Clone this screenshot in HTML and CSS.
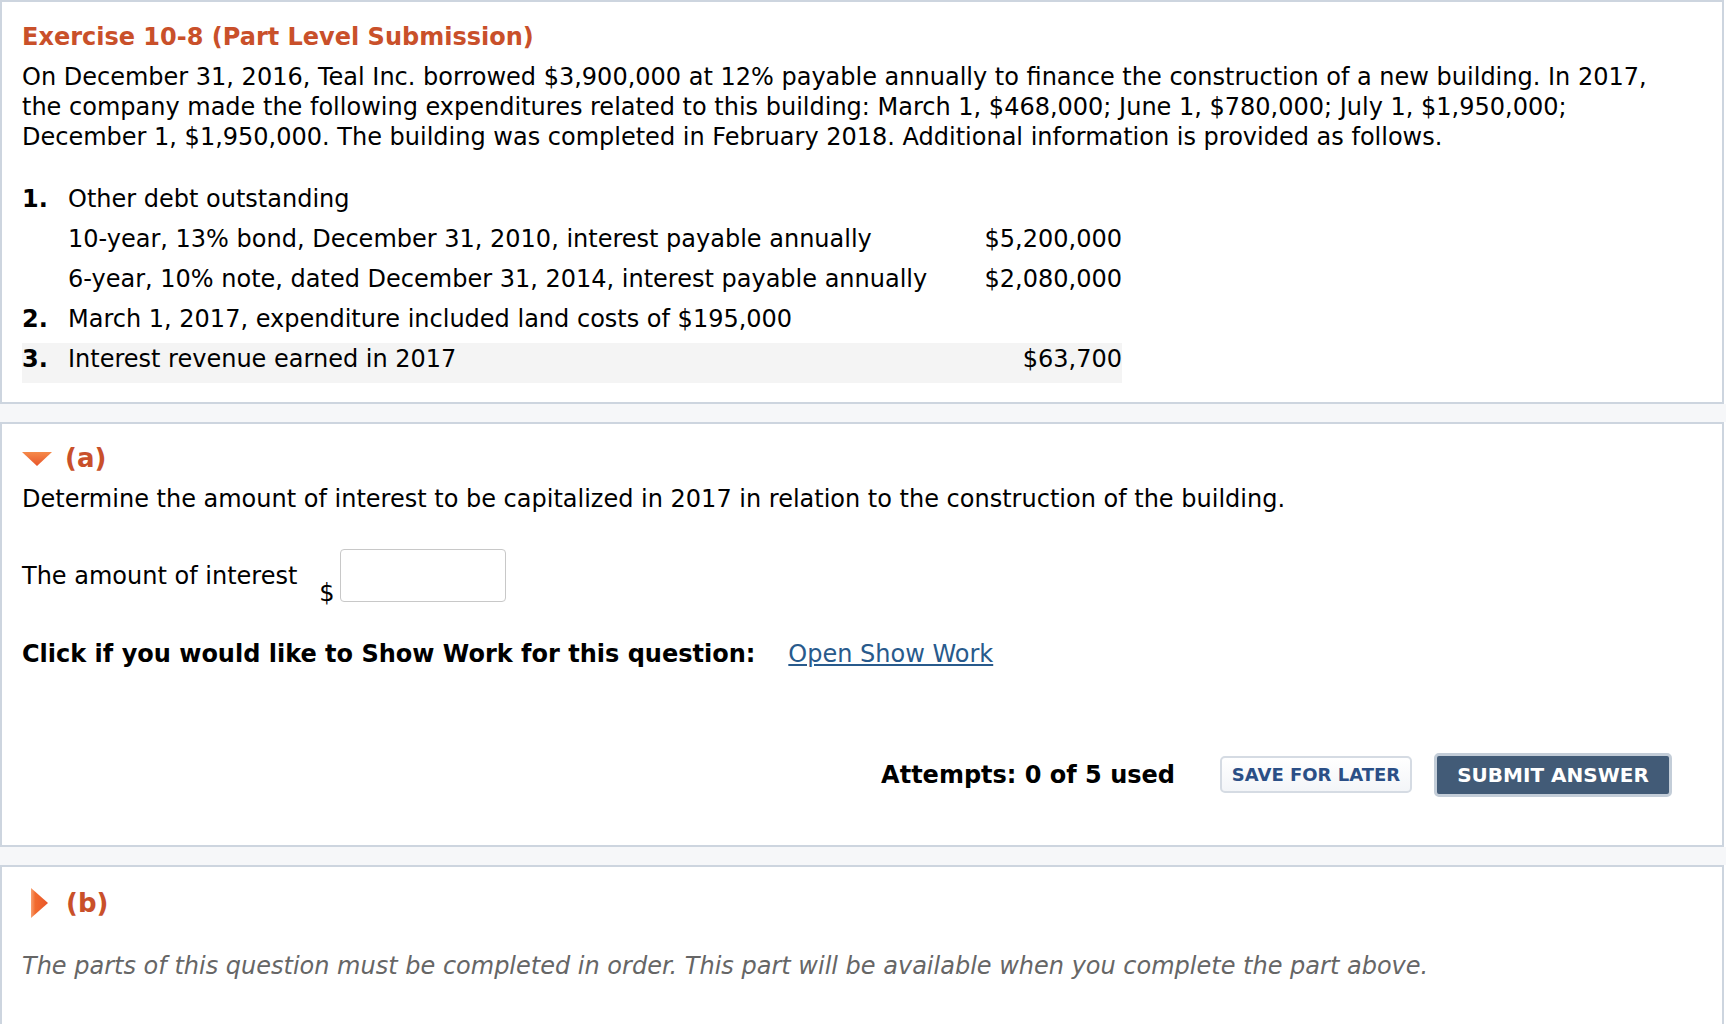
FILE: index.html
```html
<!DOCTYPE html>
<html lang="en">
<head>
<meta charset="utf-8">
<title>Exercise 10-8</title>
<link rel="stylesheet" href="styles.css">
</head>
<body>
<div class="page">
  <section class="card card-question">
    <h1 class="title">Exercise 10-8 (Part Level Submission)</h1>
    <p class="intro">On December 31, 2016, Teal Inc. borrowed $3,900,000 at 12% payable annually to finance the construction of a new building. In 2017, the company made the following expenditures related to this building: March 1, $468,000; June 1, $780,000; July 1, $1,950,000; December 1, $1,950,000. The building was completed in February 2018. Additional information is provided as follows.</p>
    <table class="info">
      <tr>
        <td class="num">1.</td>
        <td class="label">Other debt outstanding</td>
        <td class="amt"></td>
      </tr>
      <tr>
        <td class="num"></td>
        <td class="label">10-year, 13% bond, December 31, 2010, interest payable annually</td>
        <td class="amt">$5,200,000</td>
      </tr>
      <tr>
        <td class="num"></td>
        <td class="label">6-year, 10% note, dated December 31, 2014, interest payable annually</td>
        <td class="amt">$2,080,000</td>
      </tr>
      <tr>
        <td class="num">2.</td>
        <td class="label">March 1, 2017, expenditure included land costs of $195,000</td>
        <td class="amt"></td>
      </tr>
      <tr class="shaded">
        <td class="num">3.</td>
        <td class="label">Interest revenue earned in 2017</td>
        <td class="amt">$63,700</td>
      </tr>
    </table>
  </section>

  <div class="spacer"></div>

  <section class="card card-part">
    <div class="part-head">
      <svg class="tri-down" width="30" height="15" viewBox="0 0 30 15" aria-hidden="true">
        <defs>
          <linearGradient id="gdown" x1="0" y1="0" x2="0" y2="1">
            <stop offset="0" stop-color="#f58a4a"/>
            <stop offset="1" stop-color="#e8552a"/>
          </linearGradient>
        </defs>
        <polygon points="0,1 30,1 15,15" fill="url(#gdown)"/>
      </svg>
      <span class="part-label">(a)</span>
    </div>
    <p class="prompt">Determine the amount of interest to be capitalized in 2017 in relation to the construction of the building.</p>
    <div class="answer-row">
      <span class="answer-label">The amount of interest</span>
      <span class="dollar">$</span>
      <span class="answer-input"></span>
    </div>
    <div class="showwork">
      <span class="showwork-text">Click if you would like to Show Work for this question:</span>
      <a class="showwork-link" href="#">Open Show Work</a>
    </div>
    <div class="actions">
      <span class="attempts">Attempts: 0 of 5 used</span>
      <span class="btn btn-save">SAVE FOR LATER</span>
      <span class="btn btn-submit">SUBMIT ANSWER</span>
    </div>
  </section>

  <div class="spacer"></div>

  <section class="card card-part card-last">
    <div class="part-head">
      <svg class="tri-right" width="18" height="30" viewBox="0 0 18 30" aria-hidden="true">
        <defs>
          <linearGradient id="gright" x1="0" y1="0" x2="1" y2="0">
            <stop offset="0" stop-color="#f8a070"/>
            <stop offset="0.25" stop-color="#f26b2e"/>
            <stop offset="1" stop-color="#e8552a"/>
          </linearGradient>
        </defs>
        <polygon points="0,0 17,15 0,30" fill="url(#gright)"/>
      </svg>
      <span class="part-label">(b)</span>
    </div>
    <p class="locked">The parts of this question must be completed in order. This part will be available when you complete the part above.</p>
  </section>
</div>
</body>
</html>
```

FILE: styles.css
```css
html, body {
  margin: 0;
  padding: 0;
  background: #ffffff;
}

body {
  font-family: "DejaVu Sans", Verdana, sans-serif;
  font-size: 24px;
  color: #000000;
}

.page {
  width: 1724px;
}

.card {
  background: #ffffff;
  border: 2px solid #cdd5df;
  padding: 0 20px;
}

.spacer {
  height: 18px;
  background: #f6f7f9;
  width: 1726px;
}

.card-question {
  padding-top: 20px;
  padding-bottom: 19px;
}

.title {
  margin: 0;
  font-size: 24px;
  line-height: 30px;
  font-weight: bold;
  color: #c9502a;
}

.intro {
  margin: 10px 0 0;
  line-height: 30px;
  max-width: 1670px;
}

.info {
  margin-top: 31px;
  border-collapse: collapse;
  width: 1100px;
}

.info td {
  padding: 1px 0 9px;
  vertical-align: top;
  line-height: 30px;
}

.info .num {
  width: 46px;
  font-weight: bold;
}

.info .label {
  white-space: nowrap;
}

.info .amt {
  text-align: right;
  white-space: nowrap;
}

.info .shaded td {
  background: #f4f4f4;
}

.card-part {
  padding-top: 19px;
  padding-bottom: 49px;
}

.part-head {
  display: flex;
  align-items: center;
  height: 30px;
}

.tri-down {
  display: block;
  margin-right: 13px;
}

.tri-right {
  display: block;
  margin-left: 9px;
  margin-right: 17px;
}

.part-label {
  font-size: 26px;
  font-weight: bold;
  color: #c9502a;
  line-height: 30px;
}

.prompt {
  margin: 11px 0 0;
  line-height: 30px;
}

.answer-row {
  margin-top: 35px;
  display: flex;
  align-items: center;
  height: 53px;
}

.answer-label {
  line-height: 30px;
  margin-right: 22px;
}

.dollar {
  align-self: flex-end;
  line-height: 18px;
  margin-right: 5px;
}

.answer-input {
  display: block;
  width: 164px;
  height: 51px;
  border: 1px solid #c8c8c8;
  border-radius: 4px;
  background: #ffffff;
}

.showwork {
  margin-top: 37px;
  display: flex;
  align-items: center;
  line-height: 30px;
}

.showwork-text {
  font-weight: bold;
  margin-right: 33px;
}

.showwork-link {
  color: #285a8c;
  text-decoration: underline;
}

.actions {
  margin-top: 84px;
  display: flex;
  justify-content: flex-end;
  align-items: center;
  padding-right: 30px;
  height: 43px;
}

.attempts {
  font-weight: bold;
  font-size: 24px;
  margin-right: 45px;
}

.btn {
  display: flex;
  align-items: center;
  justify-content: center;
  font-weight: bold;
  box-sizing: border-box;
  border-radius: 5px;
}

.btn-save {
  width: 192px;
  height: 37px;
  font-size: 18px;
  color: #2b4f86;
  background: linear-gradient(#ffffff, #f3f5f8);
  border: 2px solid #d5dbe3;
  margin-right: 22px;
}

.btn-submit {
  width: 238px;
  height: 44px;
  font-size: 20px;
  color: #ffffff;
  background: #425b77;
  border: 3px solid #c3cdd8;
}

.card-last {
  padding-top: 21px;
  padding-bottom: 60px;
}

.locked {
  margin: 33px 0 0;
  line-height: 30px;
  font-style: italic;
  color: #666666;
}
```
